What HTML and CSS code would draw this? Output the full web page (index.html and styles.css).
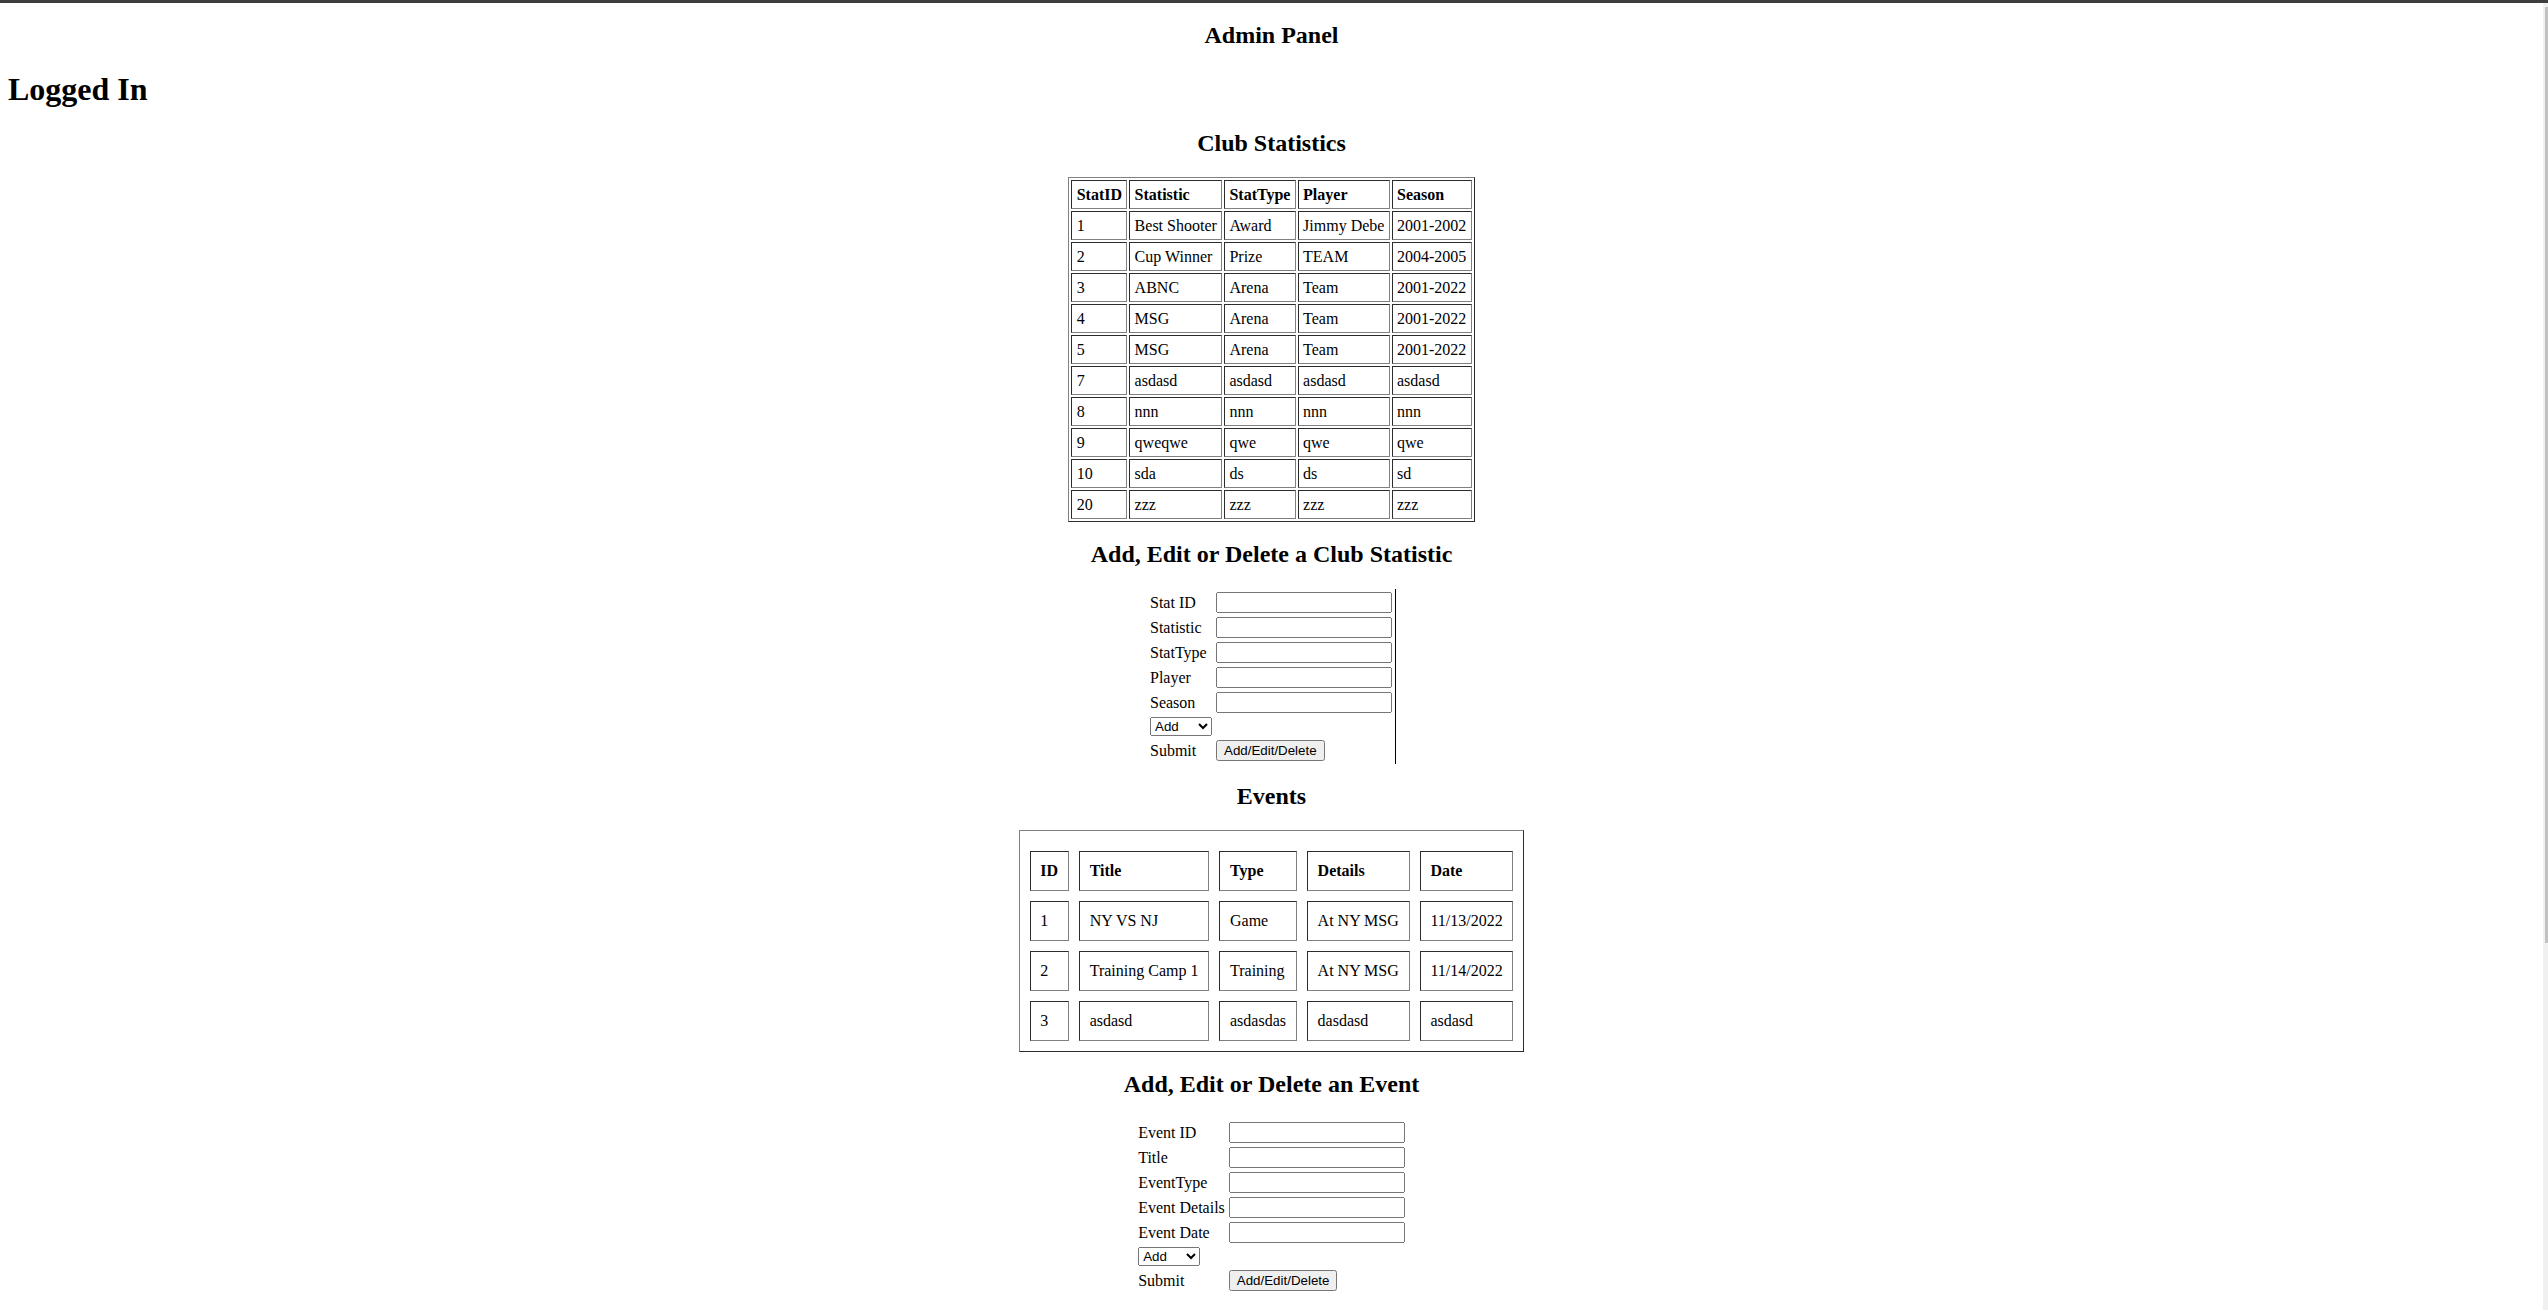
FILE: index.html
```html
<!DOCTYPE html>
<html lang="en">
<head>
<meta charset="utf-8">
<title>Admin Panel</title>
<link rel="stylesheet" href="styles.css">
</head>
<body>
<div class="window-frame"></div>
<div class="scrollbar"><div class="scrollbar-thumb"></div></div>
<main class="page">
  <h2 class="heading heading-top">Admin Panel</h2>
  <h1 class="status">Logged In</h1>

  <h2 class="heading">Club Statistics</h2>
  <table class="stats">
    <tr><th>StatID</th><th>Statistic</th><th>StatType</th><th>Player</th><th>Season</th></tr>
    <tr><td>1</td><td>Best Shooter</td><td>Award</td><td>Jimmy Debe</td><td>2001-2002</td></tr>
    <tr><td>2</td><td>Cup Winner</td><td>Prize</td><td>TEAM</td><td>2004-2005</td></tr>
    <tr><td>3</td><td>ABNC</td><td>Arena</td><td>Team</td><td>2001-2022</td></tr>
    <tr><td>4</td><td>MSG</td><td>Arena</td><td>Team</td><td>2001-2022</td></tr>
    <tr><td>5</td><td>MSG</td><td>Arena</td><td>Team</td><td>2001-2022</td></tr>
    <tr><td>7</td><td>asdasd</td><td>asdasd</td><td>asdasd</td><td>asdasd</td></tr>
    <tr><td>8</td><td>nnn</td><td>nnn</td><td>nnn</td><td>nnn</td></tr>
    <tr><td>9</td><td>qweqwe</td><td>qwe</td><td>qwe</td><td>qwe</td></tr>
    <tr><td>10</td><td>sda</td><td>ds</td><td>ds</td><td>sd</td></tr>
    <tr><td>20</td><td>zzz</td><td>zzz</td><td>zzz</td><td>zzz</td></tr>
  </table>

  <h2 class="heading">Add, Edit or Delete a Club Statistic</h2>
  <form class="editor">
    <table class="editor-grid editor-divided">
      <tr><td><label for="statid">Stat ID</label></td><td><input class="field" type="text" id="statid"></td></tr>
      <tr><td><label for="statistic">Statistic</label></td><td><input class="field" type="text" id="statistic"></td></tr>
      <tr><td><label for="stattype">StatType</label></td><td><input class="field" type="text" id="stattype"></td></tr>
      <tr><td><label for="player">Player</label></td><td><input class="field" type="text" id="player"></td></tr>
      <tr><td><label for="season">Season</label></td><td><input class="field" type="text" id="season"></td></tr>
      <tr><td><select class="mode"><option>Add</option><option>Edit</option><option>Delete</option></select></td><td></td></tr>
      <tr><td>Submit</td><td><button class="action" type="button">Add/Edit/Delete</button></td></tr>
    </table>
  </form>

  <h2 class="heading">Events</h2>
  <table class="events">
    <tr><th>ID</th><th>Title</th><th>Type</th><th>Details</th><th>Date</th></tr>
    <tr><td>1</td><td>NY VS NJ</td><td>Game</td><td>At NY MSG</td><td>11/13/2022</td></tr>
    <tr><td>2</td><td>Training Camp 1</td><td>Training</td><td>At NY MSG</td><td>11/14/2022</td></tr>
    <tr><td>3</td><td>asdasd</td><td>asdasdas</td><td>dasdasd</td><td>asdasd</td></tr>
  </table>

  <h2 class="heading">Add, Edit or Delete an Event</h2>
  <form class="editor">
    <table class="editor-grid">
      <tr><td><label for="eventid">Event ID</label></td><td><input class="field" type="text" id="eventid"></td></tr>
      <tr><td><label for="title">Title</label></td><td><input class="field" type="text" id="title"></td></tr>
      <tr><td><label for="eventtype">EventType</label></td><td><input class="field" type="text" id="eventtype"></td></tr>
      <tr><td><label for="eventdetails">Event Details</label></td><td><input class="field" type="text" id="eventdetails"></td></tr>
      <tr><td><label for="eventdate">Event Date</label></td><td><input class="field" type="text" id="eventdate"></td></tr>
      <tr><td><select class="mode"><option>Add</option><option>Edit</option><option>Delete</option></select></td><td></td></tr>
      <tr><td>Submit</td><td><button class="action" type="button">Add/Edit/Delete</button></td></tr>
    </table>
  </form>
</main>
</body>
</html>
```

FILE: styles.css
```css
body {
  margin: 0;
  background: #ffffff;
  color: #000000;
  font-family: "Liberation Serif", "Times New Roman", serif;
  font-size: 16px;
}

.window-frame {
  position: fixed;
  top: 0;
  left: 0;
  right: 0;
  height: 3px;
  background: #3d3d3d;
  z-index: 10;
}

.scrollbar {
  position: fixed;
  top: 0;
  right: 0;
  bottom: 0;
  width: 5px;
  background: #f0f0f0;
  z-index: 5;
}

.scrollbar-thumb {
  margin: 7px 0 0 2px;
  height: 936px;
  background: #c1c1c1;
}

.page {
  padding: 0 13px 40px 8px;
}

.heading {
  margin: 19px 0 21px;
  font-size: 24px;
  line-height: 26px;
  font-weight: bold;
  text-align: center;
}

.heading-top {
  margin-top: 22px;
}

.status {
  margin: 23px 0 23px;
  font-size: 32px;
  line-height: 36px;
  font-weight: bold;
}

.stats {
  margin: 0 auto;
  border: 1px outset #808080;
  border-spacing: 2px;
}

.stats th,
.stats td {
  border: 1px inset #808080;
  padding: 5px 4.3px;
  line-height: 17px;
  text-align: left;
}

.events {
  margin: 0 auto;
  border: 1px outset #808080;
  border-spacing: 10px;
  padding-top: 10px;
}

.events th,
.events td {
  border: 1px inset #808080;
  padding: 10px 9.8px;
  line-height: 18px;
  text-align: left;
}

.editor {
  margin: 0;
}

.editor-grid {
  margin: 22px auto 0;
  border-spacing: 2px;
}

.editor-grid td {
  padding: 1px;
  text-align: left;
}

.editor-divided {
  border-right: 1px solid #000000;
}

.field {
  box-sizing: border-box;
  width: 176px;
  height: 21px;
  margin: 0;
  font-family: "Liberation Sans", Arial, sans-serif;
  font-size: 13.333px;
}

.mode {
  box-sizing: border-box;
  width: 62px;
  height: 19px;
  margin: 0;
  font-family: "Liberation Sans", Arial, sans-serif;
  font-size: 13.333px;
}

.action {
  margin: 0;
  font-family: "Liberation Sans", Arial, sans-serif;
  font-size: 13.333px;
}
```
